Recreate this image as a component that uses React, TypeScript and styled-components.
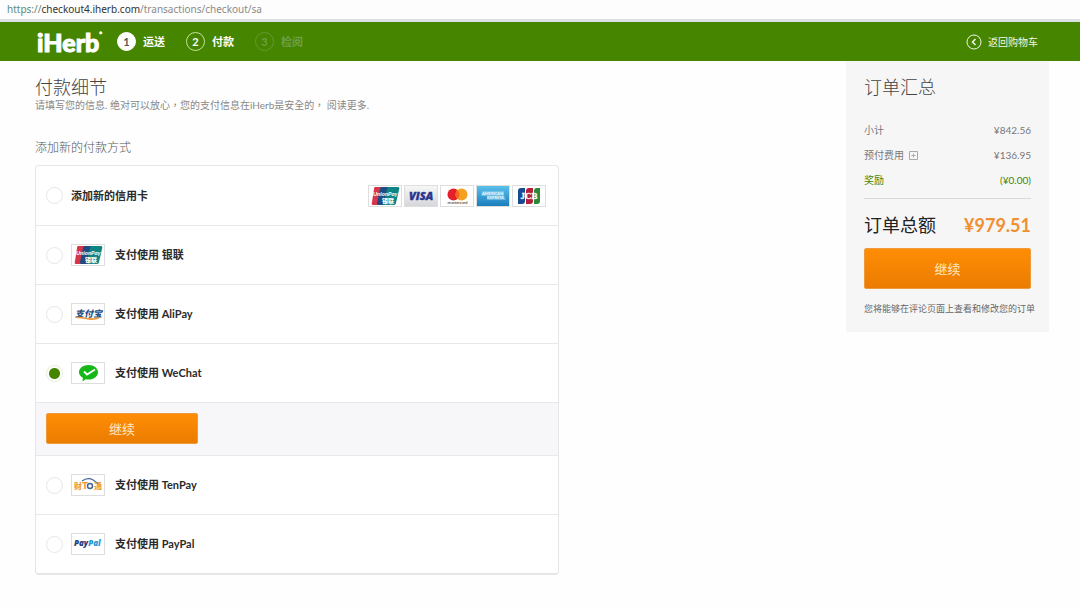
import React, { useState } from 'react';
import styled, { createGlobalStyle } from 'styled-components';

const GlobalStyle = createGlobalStyle`
  *, *::before, *::after { box-sizing: border-box; }
  body {
    margin: 0;
    background: #fefefe;
    color: #333;
    font-family: Lato, "Noto Sans CJK SC", sans-serif;
    font-size: 10px;
  }
  h1, h2, p, dl, dd, dt, ol, fieldset { margin: 0; padding: 0; border: 0; }
`;

const AddressBar = styled.div`
  height: 22px;
  padding: 0 7px;
  border-bottom: 3px solid #dde1e3;
  background: #fdfdfd;
  color: #8a8a8a;
  font: 10px/18px "Noto Sans", sans-serif;
`;
const Scheme = styled.span`
  color: #5d8a78;
`;
const Host = styled.span`
  color: #333;
`;

const Header = styled.header`
  display: flex;
  align-items: center;
  height: 39px;
  padding: 0 42px 0 37px;
  background: #458500;
  color: #fff;
`;
const Logo = styled.a`
  display: flex;
  width: 67px;
  margin-right: 13px;
  color: #fff;
  font-size: 25px;
  font-weight: 900;
  line-height: 28px;
  text-decoration: none;
  -webkit-text-stroke: 1px #fff;
`;
const Registered = styled.sup`
  font-size: 4px;
  line-height: 10px;
`;
const Steps = styled.ol`
  display: flex;
  gap: 21px;
  flex: 1;
  list-style: none;
`;
const Step = styled.li<{ $state: 'done' | 'current' | 'next' }>`
  display: flex;
  align-items: center;
  gap: 7px;
  font-size: 11px;
  font-weight: 700;
  line-height: 20px;
  color: ${p => (p.$state === 'next' ? '#6f9f45' : '#fff')};
`;
const StepNumber = styled.span<{ $state: 'done' | 'current' | 'next' }>`
  width: 19px;
  height: 19px;
  border: 1px solid ${p => (p.$state === 'done' ? '#fff' : p.$state === 'current' ? '#c5e39b' : '#65992f')};
  border-radius: 50%;
  background: ${p => (p.$state === 'done' ? '#fff' : 'transparent')};
  color: ${p => (p.$state === 'done' ? '#555' : 'inherit')};
  font: 700 11px/17px Lato, sans-serif;
  text-align: center;
`;
const BackLink = styled.a`
  display: flex;
  align-items: center;
  gap: 6px;
  color: #f0f7e6;
  font-size: 10px;
  line-height: 20px;
  text-decoration: none;
`;

const Page = styled.div`
  display: flex;
  align-items: flex-start;
  justify-content: space-between;
  gap: 32px;
  padding: 0 31px 35px 35px;
`;
const Main = styled.main`
  flex: 0 1 524px;
  padding-top: 15px;
`;
const Title = styled.h1`
  font-size: 18px;
  font-weight: 300;
  line-height: 22px;
  color: #444;
`;
const Intro = styled.p`
  margin-bottom: 27px;
  color: #888;
  font-family: Lato, "Noto Sans CJK TC", sans-serif;
  font-size: 10px;
  line-height: 14px;
  text-spacing-trim: space-all;
`;
const SectionTitle = styled.h2`
  margin-bottom: 8px;
  color: #555;
  font-size: 12px;
  font-weight: 300;
  line-height: 18px;
`;
const Methods = styled.fieldset`
  border: 1px solid #e6e6e6;
  border-bottom-width: 2px;
  border-radius: 4px;
  background: #fff;
`;
const Method = styled.div`
  display: flex;
  align-items: center;
  height: 59px;
  padding: 0 12px 0 10px;
  & ~ & { border-top: 1px solid #e8e8e8; }
`;
const MethodLabel = styled.label`
  display: flex;
  align-items: center;
  gap: 8px;
  flex: 1;
  color: #2a2a2a;
  font-size: 11px;
  font-weight: 700;
  line-height: 20px;
`;
const Radio = styled.input`
  appearance: none;
  width: 17px;
  height: 17px;
  margin: 0;
  border: 1px solid #e6e6e6;
  border-radius: 50%;
  background: #fff;
  &:checked {
    border-color: #e4efd6;
    background: radial-gradient(circle, #458500 5px, #fff 6px);
  }
`;
const Cards = styled.div`
  display: flex;
  gap: 2px;
`;
const CardBox = styled.svg`
  display: block;
  width: 34px;
  height: 22px;
  border: 1px solid #dedede;
  background: #fff;
`;
const MethodName = styled.span`
  padding-left: 2px;
`;
const ContinuePanel = styled.div`
  padding: 10px 10px 11px;
  border-top: 1px solid #e8e8e8;
  background: #f7f6f9;
`;
const OrangeButton = styled.button<{ $width: string; $height: number }>`
  display: block;
  width: ${p => p.$width};
  height: ${p => p.$height}px;
  padding: 0;
  border: 1px solid #ee9a3a;
  border-radius: 2px;
  background: linear-gradient(#ff8d05, #ea7c00);
  color: #ffe9c8;
  font: 13px/20px Lato, "Noto Sans CJK SC", sans-serif;
`;

const Summary = styled.aside`
  flex: 0 0 203px;
  min-width: 0;
  padding: 15px 18px;
  background: #f6f6f7;
`;
const Costs = styled.dl`
  margin: 20px 0 13px;
  padding-bottom: 5px;
  border-bottom: 1px solid #d9dade;
`;
const Cost = styled.div<{ $green?: boolean }>`
  display: flex;
  justify-content: space-between;
  color: ${p => (p.$green ? '#458500' : '#777')};
  font-size: 10px;
  line-height: 25px;
`;
const CostName = styled.dt`
  display: flex;
  align-items: center;
  gap: 5px;
`;
const ExpandButton = styled.button`
  display: flex;
  padding: 0;
  border: 0;
  background: none;
  color: #aaa;
`;
const Total = styled.div`
  display: flex;
  justify-content: space-between;
  margin-bottom: 10px;
  color: #222;
  font-size: 18px;
  line-height: 26px;
`;
const TotalPrice = styled.strong`
  color: #f09030;
  font-weight: 700;
`;
const Note = styled.p`
  padding: 13px 0 1px;
  color: #666;
  font-size: 9px;
  line-height: 14px;
  white-space: nowrap;
`;

function UnionPay() {
  return (
    <CardBox viewBox="0 0 32 20" aria-hidden="true">
      <path d="M6 1h9l-4 18H4q-2 0-1-3L5 3q0-2 1-2z" fill="#d8354a" />
      <path d="M13 1h9l-4 18H9q-1 0-1-2l3-14q0-2 2-2z" fill="#1d4c82" />
      <path d="M20 1h9q2 0 1 3l-3 13q0 2-2 2h-9q-1 0-1-2l3-14q0-2 2-2z" fill="#0e8583" />
      <text x="4" y="10" fontSize="6" fontWeight="700" fontStyle="italic" fill="#fff" fontFamily="Lato">UnionPay</text>
      <text x="13" y="17" fontSize="6" fontWeight="900" fill="#fff" fontFamily="Noto Sans CJK SC">银联</text>
    </CardBox>
  );
}

function Visa() {
  return (
    <CardBox viewBox="0 0 32 20" aria-hidden="true">
      <defs>
        <linearGradient id="visa" x1="0" y1="0" x2="0" y2="1">
          <stop offset="0" stopColor="#f7f7f7" />
          <stop offset="1" stopColor="#d6d7da" />
        </linearGradient>
      </defs>
      <path d="M0 0h32v20H0z" fill="url(#visa)" />
      <text x="4" y="14" fontSize="11" fontWeight="800" fontStyle="italic" fill="#29348c" stroke="#29348c" strokeWidth=".4" fontFamily="Open Sans">VISA</text>
    </CardBox>
  );
}

function Mastercard() {
  return (
    <CardBox viewBox="0 0 32 20" aria-hidden="true">
      <circle cx="12.5" cy="8.5" r="6" fill="#e5202a" />
      <circle cx="20.5" cy="8.5" r="6" fill="#f6a021" />
      <path d="M16.5 4a6 6 0 0 1 0 9 6 6 0 0 1 0-9z" fill="#f4661f" />
      <text x="16.5" y="18" fontSize="4" fontWeight="700" textAnchor="middle" fill="#654" fontFamily="Lato">mastercard</text>
    </CardBox>
  );
}

function Amex() {
  return (
    <CardBox viewBox="0 0 32 20" aria-hidden="true">
      <defs>
        <linearGradient id="amex" x1="0" y1="0" x2="0" y2="1">
          <stop offset="0" stopColor="#5cc0ea" />
          <stop offset="1" stopColor="#1a7dbd" />
        </linearGradient>
      </defs>
      <path d="M0 0h32v20H0z" fill="url(#amex)" />
      <path d="M5 5h22v4l2 5H10V10H4z" fill="#9bd5f0" opacity=".5" />
      <text x="5" y="9" fontSize="4" fontWeight="900" fill="#e4f6ff" fontFamily="Lato">AMERICAN</text>
      <text x="10" y="13" fontSize="4" fontWeight="900" fill="#e4f6ff" fontFamily="Lato">EXPRESS</text>
    </CardBox>
  );
}

function Jcb() {
  return (
    <CardBox viewBox="0 0 32 20" aria-hidden="true">
      <path d="M8 2h4v13q0 3-3 3H5V5q0-3 3-3z" fill="#174b91" />
      <path d="M16 2h4v13q0 3-3 3h-4V5q0-3 3-3z" fill="#b51f3d" />
      <path d="M24 2h3v13q0 3-3 3h-3V5q0-3 3-3z" fill="#2a8a3a" />
      <text x="16" y="13" fontSize="9" fontWeight="700" textAnchor="middle" fill="#fff" stroke="#fff" strokeWidth=".3" fontFamily="Liberation Serif">JCB</text>
    </CardBox>
  );
}

function AliPay() {
  return (
    <CardBox viewBox="0 0 32 20" aria-hidden="true">
      <text x="3" y="13" fontSize="9" fontWeight="900" fontStyle="italic" fill="#1f4f86" fontFamily="Noto Sans CJK SC">支付宝</text>
      <path d="M3 14q4-2 10-.5 9 1.500 17-.5-5 3.500-12 3-6-1.500-15-2z" fill="#f09a3c" />
    </CardBox>
  );
}

function WeChat() {
  return (
    <CardBox viewBox="0 0 32 20" aria-hidden="true">
      <path d="M16.500 2c5.400 0 9.500 3.200 9.500 7.300s-4.100 7.300-9.500 7.300q-1.500 0-2.800-.4l-3.200 2.200.4-3.700C8.500 13.500 7 11.600 7 9.300 7 5.200 11.100 2 16.500 2z" fill="#16b818" />
      <path d="M12 8.500l3 3 8-5" fill="none" stroke="#fff" strokeWidth="1.800" />
    </CardBox>
  );
}

function TenPay() {
  return (
    <CardBox viewBox="0 0 32 20" aria-hidden="true">
      <path d="M10 6q8-6 16 3" fill="none" stroke="#4a6597" strokeWidth="1.200" />
      <text x="2" y="14" fontSize="8" fontWeight="900" fill="#f0a13c" fontFamily="Noto Sans CJK SC">财</text>
      <text x="10" y="14" fontSize="10" fontWeight="900" fill="#ef9734" fontFamily="Lato">T</text>
      <circle cx="18" cy="11" r="2.500" fill="none" stroke="#43659b" strokeWidth="1.500" />
      <text x="22" y="14" fontSize="8" fontWeight="900" fill="#f0a13c" fontFamily="Noto Sans CJK SC">通</text>
    </CardBox>
  );
}

function PayPal() {
  return (
    <CardBox viewBox="0 0 32 20" aria-hidden="true">
      <text x="2" y="12" fontSize="8" fontWeight="800" fontStyle="italic" fill="#1f3f7d" fontFamily="Open Sans">
        Pay<tspan fill="#2898d2">Pal</tspan>
      </text>
    </CardBox>
  );
}

const methods = [
  { id: 'unionpay', label: '支付使用 银联', Brand: UnionPay },
  { id: 'alipay', label: '支付使用 AliPay', Brand: AliPay },
  { id: 'wechat', label: '支付使用 WeChat', Brand: WeChat },
  { id: 'tenpay', label: '支付使用 TenPay', Brand: TenPay },
  { id: 'paypal', label: '支付使用 PayPal', Brand: PayPal },
];

const steps = [
  { n: 1, label: '运送', state: 'done' },
  { n: 2, label: '付款', state: 'current' },
  { n: 3, label: '检阅', state: 'next' },
] as const;

export default function App() {
  const [selected, setSelected] = useState('wechat');

  return (
    <>
      <GlobalStyle />
      <AddressBar>
        <Scheme>https://</Scheme>
        <Host>checkout4.iherb.com</Host>/transactions/checkout/sa
      </AddressBar>
      <Header>
        <Logo href="#">
          iHerb<Registered>●</Registered>
        </Logo>
        <Steps>
          {steps.map(s => (
            <Step key={s.n} $state={s.state}>
              <StepNumber $state={s.state}>{s.n}</StepNumber>
              {s.label}
            </Step>
          ))}
        </Steps>
        <BackLink href="#">
          <svg width="16" height="16" viewBox="0 0 16 16" fill="none" stroke="currentColor" aria-hidden="true">
            <circle cx="8" cy="8" r="7" />
            <path d="M9.500 5L6.500 8l3 3" strokeWidth="1.500" />
          </svg>
          返回购物车
        </BackLink>
      </Header>
      <Page>
        <Main>
          <Title>付款细节</Title>
          <Intro>请填写您的信息. 绝对可以放心，您的支付信息在iHerb是安全的， 阅读更多.</Intro>
          <SectionTitle id="methods">添加新的付款方式</SectionTitle>
          <Methods aria-labelledby="methods">
            <Method>
              <MethodLabel>
                <Radio type="radio" name="method" checked={selected === 'card'} onChange={() => setSelected('card')} />
                添加新的信用卡
              </MethodLabel>
              <Cards>
                <UnionPay />
                <Visa />
                <Mastercard />
                <Amex />
                <Jcb />
              </Cards>
            </Method>
            {methods.map(({ id, label, Brand }) => (
              <React.Fragment key={id}>
                <Method>
                  <MethodLabel>
                    <Radio type="radio" name="method" checked={selected === id} onChange={() => setSelected(id)} />
                    <Brand />
                    <MethodName>{label}</MethodName>
                  </MethodLabel>
                </Method>
                {selected === id && (
                  <ContinuePanel>
                    <OrangeButton type="button" $width="152px" $height={31}>继续</OrangeButton>
                  </ContinuePanel>
                )}
              </React.Fragment>
            ))}
          </Methods>
        </Main>
        <Summary>
          <Title as="h2">订单汇总</Title>
          <Costs>
            <Cost>
              <CostName>小计</CostName>
              <dd>¥842.56</dd>
            </Cost>
            <Cost>
              <CostName>
                预付费用
                <ExpandButton type="button" aria-label="预付费用">
                  <svg width="9" height="9" viewBox="0 0 9 9" fill="none" stroke="currentColor" aria-hidden="true">
                    <path d="M.5.5h8v8h-8zM4.500 2.500v4M2.500 4.500h4" />
                  </svg>
                </ExpandButton>
              </CostName>
              <dd>¥136.95</dd>
            </Cost>
            <Cost $green>
              <CostName>奖励</CostName>
              <dd>(¥0.00)</dd>
            </Cost>
          </Costs>
          <Total>
            <span>订单总额</span>
            <TotalPrice>¥979.51</TotalPrice>
          </Total>
          <OrangeButton type="button" $width="100%" $height={41}>继续</OrangeButton>
          <Note>您将能够在评论页面上查看和修改您的订单</Note>
        </Summary>
      </Page>
    </>
  );
}
